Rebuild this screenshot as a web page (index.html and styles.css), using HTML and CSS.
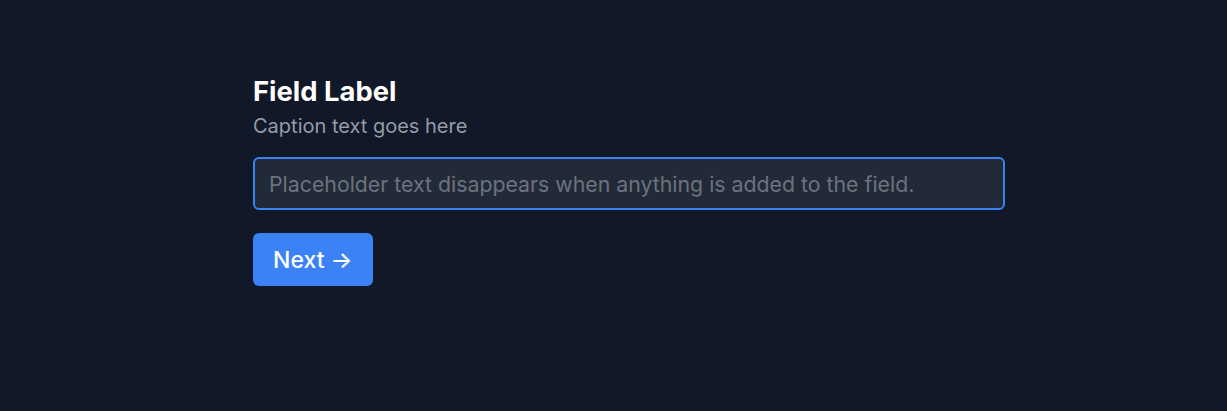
FILE: index.html
```html
<!DOCTYPE html>
<html lang="en">
<head>
    <meta charset="UTF-8">
    <title>Field</title>
    <link rel="stylesheet" href="styles.css">
</head>
<body>
    <div class="form">
        <label class="field-label" for="field">Field Label</label>
        <p class="caption">Caption text goes here</p>
        <input id="field" class="field-input" type="text" placeholder="Placeholder text disappears when anything is added to the field." autofocus>
        <button class="next-btn">Next →</button>
    </div>
    <script>
        document.getElementById('field').focus();
    </script>
</body>
</html>
```

FILE: styles.css
```css
body {
    margin: 0;
    background-color: #111827;
    font-family: Inter, "Noto Sans", sans-serif;
    color: #fff;
}
.form {
    width: 752px;
    padding: 74px 0 0 253px;
    display: flex;
    flex-direction: column;
    align-items: flex-start;
}
.field-label {
    font-size: 27.4px;
    font-weight: 700;
    line-height: 34px;
    margin-bottom: 3px;
}
.caption {
    margin: 0 0 16px;
    font-size: 20px;
    line-height: 30px;
    color: #959ca8;
}
.field-input {
    box-sizing: border-box;
    width: 752px;
    height: 53px;
    padding: 0 14px;
    background-color: #232a37;
    border: 2px solid #3b82f6;
    border-radius: 6px;
    font-family: inherit;
    font-size: 21.3px;
    color: #fff;
    caret-color: #fff;
    outline: none;
}
.field-input::placeholder {
    color: #6b7280;
}
.next-btn {
    margin-top: 23px;
    height: 53px;
    padding: 0 20px;
    background-color: #3b82f6;
    color: #fff;
    border: none;
    border-radius: 6px;
    font-family: inherit;
    font-size: 23px;
    font-weight: 500;
    cursor: pointer;
}
```
